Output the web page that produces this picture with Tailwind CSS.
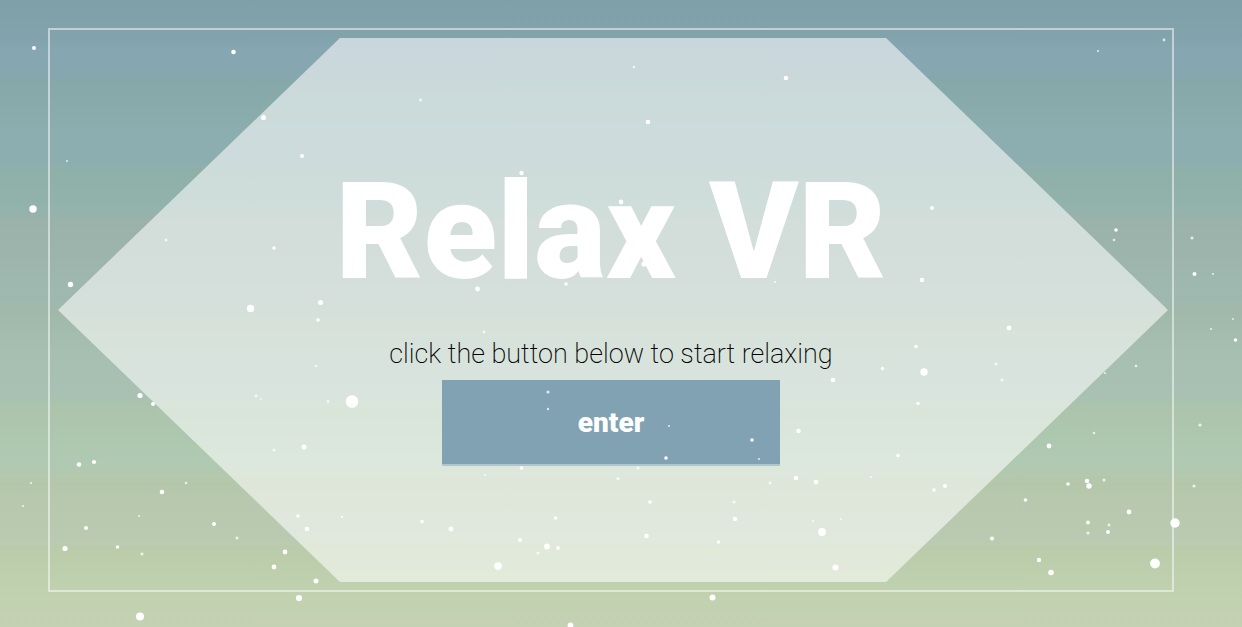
<!DOCTYPE html>
<html lang="en">
<head>
<meta charset="utf-8">
<meta name="viewport" content="width=device-width, initial-scale=1">
<title>Relax VR</title>
<script src="https://cdn.jsdelivr.net/npm/@tailwindcss/browser@4"></script>
</head>
<body class="font-[Roboto,sans-serif]">
<main class="relative flex min-h-screen overflow-hidden bg-[linear-gradient(to_bottom,#7f9fa9_0%,#82a2ac_6%,#86a6b1_8%,#86a6b0_12%,#87a8a9_13%,#8aacac_19%,#8daeb0_21%,#8daeb0_26%,#8fb0a9_27%,#92b3ac_33%,#9ab2a9_35%,#9fb8b0_47%,#a1b9aa_50%,#a6bfb0_56%,#a8c1b3_63%,#abc4ab_65%,#b0c9b2_74%,#b5c7ab_77%,#bacab2_86%,#bacca9_88%,#bfd1ae_94%,#c1d2b0_96%,#c4d1b3_100%)] pt-7 pr-[68px] pb-[35px] pl-12">
  <section class="flex grow border-2 border-white/50 py-2 pr-1 pl-2">
    <div class="flex grow flex-col items-center justify-center bg-white/56 pr-1 [clip-path:polygon(25.4%_0,74.6%_0,100%_50%,74.6%_100%,25.4%_100%,0_50%)]">
      <h1 class="text-[135px] leading-[156px] font-black text-white">Relax VR</h1>
      <p class="mt-7 text-[27px] leading-8 font-extralight text-black">click the button below to start relaxing</p>
      <button type="button" class="mt-2.5 h-[86px] w-[338px] cursor-pointer border-b-2 border-[#b0c6c9] bg-[#80a2b3] pt-0.5 text-[28px] font-black text-white">enter</button>
    </div>
  </section>
  <svg class="pointer-events-none absolute inset-0 h-full w-full" viewBox="0 0 1242 627" preserveAspectRatio="xMidYMid slice" aria-hidden="true">
    <g id="stars" fill="#fff"></g>
  </svg>
</main>
<script>
const stars = [
[34,48,2],[233.5,52,2.3],[263.5,117.5,2.6],[302,156,2],[67,161,1],[33,209,3.7],[166,240,1.5],[274,248,1.7],[70.5,284.5,2.7],[250.5,308.5,3.7],[320.5,302.5,2.5],[318,320,1.8],
[634,67,1.3],[786,78,2.3],[648,122,2.3],[420.5,100,1.5],[521.5,173,2.2],[621,202,2.4],[644,264,2.6],[477.5,289,2.4],[566,284,1.8],[775,282,1.1],
[932,208,2],[922,280,2.3],[1098,51,1.1],[1164,40,1.4],[1116,230,1.8],[1114,240,1.3],[1192,238,1.5],[1194.5,274,2],[1213,274,1.1],
[140,395.5,2.6],[153,404,2],[316,366,1.3],[256,396,1.4],[261,399,.9],[328,401.5,1.4],[352,401.5,6.3],[274,450,1.5],[304,447,2.5],[79,464.5,2.3],[94,462,2.1],[31,483,1.1],[186,483,1.2],[162,492,2.3],[23,506,1.1],[139,516,1.1],[86,528,2],[214,524,2],[237,538,1.5],[298,516,1.8],[307,529,2.3],[342,517,1.2],[65,548.5,2.6],[117.5,547,1.8],[142,554,1.6],[285,552,2.4],[274,567,2.4],[316,581,2.5],[299,598,3.1],[140,616.5,4],
[484,332,1.4],[548,392,1.6],[548,409,1.2],[669,426,1.1],[752,440,1.7],[666,458,1.8],[759,459,1.1],[798.5,431,2.3],[485,475,1.1],[521.5,468,1.8],[638,468,1.4],[618,478.5,1.6],[650,502,1.8],[770,483,1.5],[796,478,2.3],[816,482,2.3],[734,502,1.6],[422,521.5,1.8],[451,529,2.4],[555.5,518,1.8],[735,519,2.2],[813,521,1.1],[646.5,536,2.3],[822,532,4],[520,540,2],[547,546.5,2.9],[558,548,1.9],[538,553,1.6],[718.5,542,1.7],[498,566,3.8],[712.5,597.5,3],[570.5,625.5,2.9],
[1009,328,2.4],[916,346.5,1.8],[882.5,368.5,1.7],[924,372,3.7],[833,380,2.3],[996,364,1.6],[1002,380,1.6],[918,403.5,1.7],[1105,373,1.1],[1136,366,1.3],[1211,329,1.1],[1233,319,1],[1235.5,340,1.8],[1200,425,1.6],[1094,433,1.3],[1049,446,2.4],[898,455.5,1.8],[871,477,1.1],[934,490,1.7],[945,486,2],[1068,484,1.8],[1087,481,2.2],[1089,486,2.7],[1104,480,1.5],[1025.5,500,1.8],[1194,486,1.6],[1129,512,2.4],[1088,522.5,1.9],[1088,533,1.6],[1109,525,1.4],[1108,532,1.9],[1175,523,4.7],[841,519,1],[992,538.5,2],[1039,560,2.2],[1051,572.5,2.8],[1155,563.5,4.9],[835.5,567.5,3]];
const layer = document.getElementById('stars');
for (const [x, y, r] of stars) {
  const c = document.createElementNS('http://www.w3.org/2000/svg', 'circle');
  c.setAttribute('cx', x);
  c.setAttribute('cy', y);
  c.setAttribute('r', r);
  if (r < 1.7) c.setAttribute('opacity', .75);
  layer.append(c);
}
</script>
</body>
</html>
